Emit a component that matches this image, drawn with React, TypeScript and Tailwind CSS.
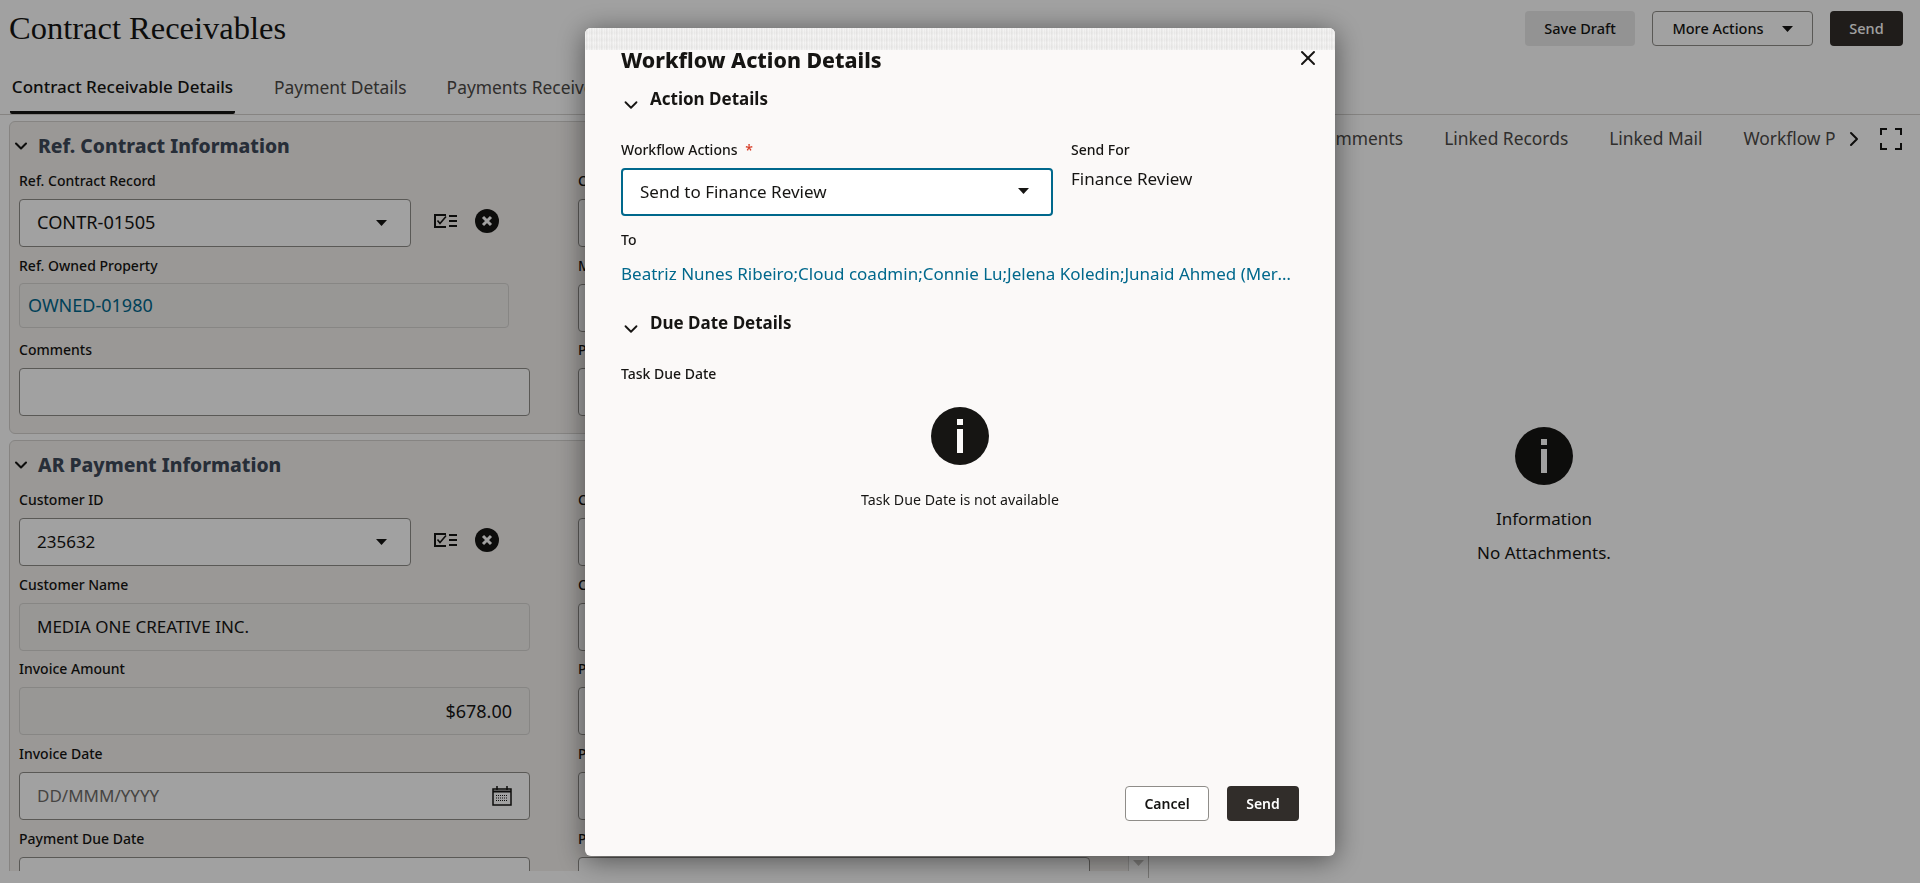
import { ChevronDown, ChevronRight, X } from 'lucide-react';
import type { ReactNode } from 'react';

const sans = 'font-["Noto_Sans",sans-serif]';

function Caret({ className = '' }: { className?: string }) {
  return (
    <svg width="11" height="6" viewBox="0 0 11 6" className={className}>
      <path d="M0 0h11L5.5 6z" fill="currentColor" />
    </svg>
  );
}

function InfoIcon({ stem }: { stem: string }) {
  return (
    <svg width="58" height="58" viewBox="0 0 58 58">
      <circle cx="29" cy="29" r="29" fill="#161513" />
      <rect x="26" y="12" width="6" height="6" fill={stem} />
      <rect x="26" y="22" width="6" height="24" fill={stem} />
    </svg>
  );
}

function ChecklistIcon() {
  return (
    <svg width="23" height="14" viewBox="0 0 23 14" fill="none" stroke="#161513">
      <path d="M12 1H1v12h11" strokeWidth="2" />
      <path d="M3.5 6.5 6 9.5 12 2.5" strokeWidth="1.6" />
      <path d="M15 2h8M15 7h8M15 12h8" strokeWidth="2" />
    </svg>
  );
}

function ClearIcon() {
  return (
    <svg width="24" height="24" viewBox="0 0 24 24">
      <circle cx="12" cy="12" r="12" fill="#161513" />
      <path d="M8 8l8 8M16 8l-8 8" stroke="#fff" strokeWidth="3" />
    </svg>
  );
}

function CalendarIcon() {
  return (
    <svg width="20" height="20" viewBox="0 0 20 20" fill="none" stroke="#161513">
      <rect x="1" y="3" width="18" height="16" strokeWidth="1.5" />
      <path d="M1 5.5h18" strokeWidth="2" />
      <path d="M5 0v4M15 0v4" strokeWidth="1.5" />
      <path d="M4 9.5h12M4 12h12M4 14.5h12" strokeWidth="1.2" strokeDasharray="1 1" />
    </svg>
  );
}

function FullscreenIcon() {
  return (
    <svg width="22" height="22" viewBox="0 0 22 22" fill="none" stroke="#161513" strokeWidth="2">
      <path d="M1 7V1h6M15 1h6v6M21 15v6h-6M7 21H1v-6" />
    </svg>
  );
}

function Field({ label, children }: { label: string; children?: ReactNode }) {
  return (
    <div className="h-[84.7px]">
      <div className="h-[20px] text-[14px] leading-[20px] font-medium text-[#161513] mb-[8px] whitespace-nowrap">{label}</div>
      {children}
    </div>
  );
}

const inputBox = 'h-[48px] bg-white border border-[#8f8d89] rounded-[4px] flex items-center px-[17px] text-[17px] text-[#161513]';
const readBox = 'h-[48px] bg-[#f1efed] border border-[#d6d4d1] rounded-[4px] flex items-center px-[17px] text-[17px] text-[#161513]';

function LookupRow({ children }: { children: ReactNode }) {
  return (
    <div className="flex items-center">
      <div className={`${inputBox} w-[392px] justify-between`}>
        {children}
        <Caret className="mr-[6px] text-[#161513]" />
      </div>
      <div className="ml-[23px] mt-[-5px]"><ChecklistIcon /></div>
      <div className="ml-[18px] mt-[-5px]"><ClearIcon /></div>
    </div>
  );
}

function SectionHead({ title }: { title: string }) {
  return (
    <div className="flex items-center h-[49px] pb-[2px] pl-[1px]">
      <ChevronDown size={20} strokeWidth={2.5} className="text-[#161513]" />
      <span className="ml-[7px] text-[19.3px] font-extrabold text-[#3f4a5a] leading-none">{title}</span>
    </div>
  );
}

function Section({ title, left, right }: { title: string; left: ReactNode; right: ReactNode }) {
  return (
    <div className="border border-[#d4d2cf] rounded-[6px] bg-[#f4f1ee] mb-[6px]">
      <SectionHead title={title} />
      <div className="grid grid-cols-[511px_512px] gap-x-[48px] pl-[9px] pb-[8px]">
        <div>{left}</div>
        <div>{right}</div>
      </div>
    </div>
  );
}

function RightStub({ initials }: { initials: string[] }) {
  return (
    <>
      {initials.map((c, i) => (
        <Field key={i} label={c}>
          <div className={inputBox} />
        </Field>
      ))}
    </>
  );
}

function WorkflowDialog() {
  return (
    <div className="fixed inset-0 bg-black/[.37]">
      <div className="ml-[585px] mt-[28px] w-[750px] h-[828px] bg-[#fbf9f8] rounded-[6px] shadow-[0_4px_28px_rgba(0,0,0,0.5)] overflow-hidden flex flex-col">
        <div className="h-[22px] shrink-0 bg-[repeating-linear-gradient(90deg,rgba(255,255,255,0.5)_0px,rgba(214,213,212,0.5)_2px,rgba(255,255,255,0.5)_3px,rgba(226,225,224,0.5)_5px),repeating-linear-gradient(0deg,#f4f3f2_0px,#e6e5e4_3px,#f2f1f0_7px)]" />
        <div className="flex-1 flex flex-col px-[36px]">
          <div className="flex justify-between items-center h-[22px] mt-[-1px]">
            <span className="text-[21.3px] font-extrabold text-[#161513] leading-none whitespace-nowrap">Workflow Action Details</span>
            <X size={24} strokeWidth={2} className="mr-[-21px] mt-[-4px] text-[#161513]" />
          </div>

          <div className="flex items-center h-[24px] mt-[16px]">
            <ChevronDown size={22} strokeWidth={2} className="mt-[12px] ml-[-1px] text-[#161513]" />
            <span className="ml-[8px] text-[17px] font-bold text-[#161513]">Action Details</span>
          </div>

          <div className="flex mt-[28px]">
            <div className="w-[450px]">
              <div className="h-[20px] mt-[1px] text-[14px] leading-[20px] font-medium text-[#161513]">
                Workflow Actions <span className="text-[#d63b25] ml-[4px]">*</span>
              </div>
              <div className="mt-[8px] w-[432px] h-[48px] bg-white border-2 border-[#00688c] rounded-[4px] flex items-center justify-between px-[17px] text-[17px] text-[#161513]">
                <span>Send to Finance Review</span>
                <Caret className="mr-[5px] mb-[3px]" />
              </div>
            </div>
            <div>
              <div className="h-[20px] mt-[1px] text-[14px] leading-[20px] font-medium text-[#161513]">Send For</div>
              <div className="mt-[7px] text-[17px] leading-[24px] text-[#161513]">Finance Review</div>
            </div>
          </div>

          <div className="mt-[14px] h-[20px] text-[14px] leading-[20px] font-medium text-[#161513]">To</div>
          <div className="mt-[12px] w-[678px] truncate text-[17px] leading-[24px] text-[#00688c]">
            Beatriz Nunes Ribeiro;Cloud coadmin;Connie Lu;Jelena Koledin;Junaid Ahmed (Merchant);Maria Lopez
          </div>

          <div className="flex items-center h-[24px] mt-[25px]">
            <ChevronDown size={22} strokeWidth={2} className="mt-[12px] ml-[-1px] text-[#161513]" />
            <span className="ml-[8px] text-[17px] font-bold text-[#161513]">Due Date Details</span>
          </div>

          <div className="mt-[29px] h-[20px] text-[14px] leading-[20px] font-medium text-[#161513]">Task Due Date</div>

          <div className="flex flex-col items-center mt-[23px] mx-[-36px]">
            <InfoIcon stem="#fbf9f8" />
            <div className="mt-[25px] text-[14.2px] leading-[20px] text-[#161513]">Task Due Date is not available</div>
          </div>

          <div className="mt-auto mb-[35px] flex justify-end gap-[18px]">
            <button className="w-[84px] h-[35px] border border-[#8f8d89] rounded-[4px] bg-white text-[14px] font-semibold text-[#161513]">Cancel</button>
            <button className="w-[72px] h-[35px] rounded-[4px] bg-[#312d2a] text-[14px] font-semibold text-white">Send</button>
          </div>
        </div>
      </div>
    </div>
  );
}

export default function App() {
  return (
    <div className={`h-screen w-full overflow-hidden bg-white ${sans}`}>
      <div className="flex items-start justify-between h-[70px] pl-[9px] pr-[17px]">
        <h1 className='font-["Liberation_Serif",serif] text-[32.5px] leading-[36px] mt-[10px] text-[#161513]'>Contract Receivables</h1>
        <div className="flex items-center gap-[17px] mt-[11px] text-[14.5px] font-medium">
          <button className="w-[110px] h-[35px] rounded-[4px] bg-[#e9e9e9] text-[#161513]">Save Draft</button>
          <button className="w-[161px] h-[35px] rounded-[4px] border border-[#8f8d89] text-[#161513] flex items-center justify-center gap-[18px]">
            More Actions <Caret />
          </button>
          <button className="w-[73px] h-[35px] rounded-[4px] bg-[#312d2a] text-white">Send</button>
        </div>
      </div>

      <div className="flex h-[44px] pl-[10px] gap-[39px] border-b border-[#d4d2cf] box-content text-[17.4px] text-[#4c4a47]">
        <div className="w-[225px] h-[44px] flex items-start justify-center pt-[4px] border-b-[3px] border-[#161513] text-[17px] font-medium text-[#161513] whitespace-nowrap rounded-b-[2px]">Contract Receivable Details</div>
        <div className="pt-[4px]">Payment Details</div>
        <div className="pt-[4px] ml-[1px]">Payments Received</div>
      </div>

      <div className="flex">
        <div className="w-[1149px] h-[763px] flex border-r border-[#bdbbb8]">
          <div className="w-[1120px] h-[756px] ml-[9px] pt-[6px] overflow-hidden shrink-0">
            <Section
              title="Ref. Contract Information"
              left={
                <>
                  <Field label="Ref. Contract Record">
                    <LookupRow><span className="text-[18.2px]">CONTR-01505</span></LookupRow>
                  </Field>
                  <Field label="Ref. Owned Property">
                    <div className={`${readBox} w-[490px] !h-[45px] mt-[-1px] !px-[8px] !text-[18px] !text-[#00688c]`}>OWNED-01980</div>
                  </Field>
                  <Field label="Comments"><div className={inputBox} /></Field>
                </>
              }
              right={<RightStub initials={['C', 'M', 'P']} />}
            />
            <Section
              title="AR Payment Information"
              left={
                <>
                  <Field label="Customer ID"><LookupRow><span>235632</span></LookupRow></Field>
                  <Field label="Customer Name"><div className={readBox}>MEDIA ONE CREATIVE INC.</div></Field>
                  <Field label="Invoice Amount"><div className={`${readBox} justify-end !text-[18px]`}>$678.00</div></Field>
                  <Field label="Invoice Date">
                    <div className={`${inputBox} justify-between !text-[#6f6d6a]`}>
                      <span>DD/MMM/YYYY</span>
                      <CalendarIcon />
                    </div>
                  </Field>
                  <Field label="Payment Due Date"><div className={inputBox} /></Field>
                </>
              }
              right={<RightStub initials={['C', 'C', 'P', 'P', 'P']} />}
            />
          </div>
          <div className="flex-1 flex flex-col items-center justify-end pb-[12px] text-[#c4c2bf]">
            <Caret />
          </div>
        </div>

        <div className="flex-1 min-w-0">
          <div className="flex items-center h-[47px] text-[17.4px] text-[#4c4a47]">
            <div className="w-[686px] overflow-hidden flex gap-[41px] pl-[165px] whitespace-nowrap">
              <span>Comments</span>
              <span>Linked Records</span>
              <span>Linked Mail</span>
              <span>Workflow Process</span>
            </div>
            <ChevronRight size={24} strokeWidth={2} className="ml-[7px] text-[#161513]" />
            <div className="ml-[14px]"><FullscreenIcon /></div>
          </div>
          <div className="flex flex-col items-center mt-[265px] ml-[19px] text-[17px] text-[#161513]">
            <InfoIcon stem="#ffffff" />
            <div className="mt-[22px] leading-[24px]">Information</div>
            <div className="mt-[10px] leading-[24px]">No Attachments.</div>
          </div>
        </div>
      </div>

      <WorkflowDialog />
    </div>
  );
}
